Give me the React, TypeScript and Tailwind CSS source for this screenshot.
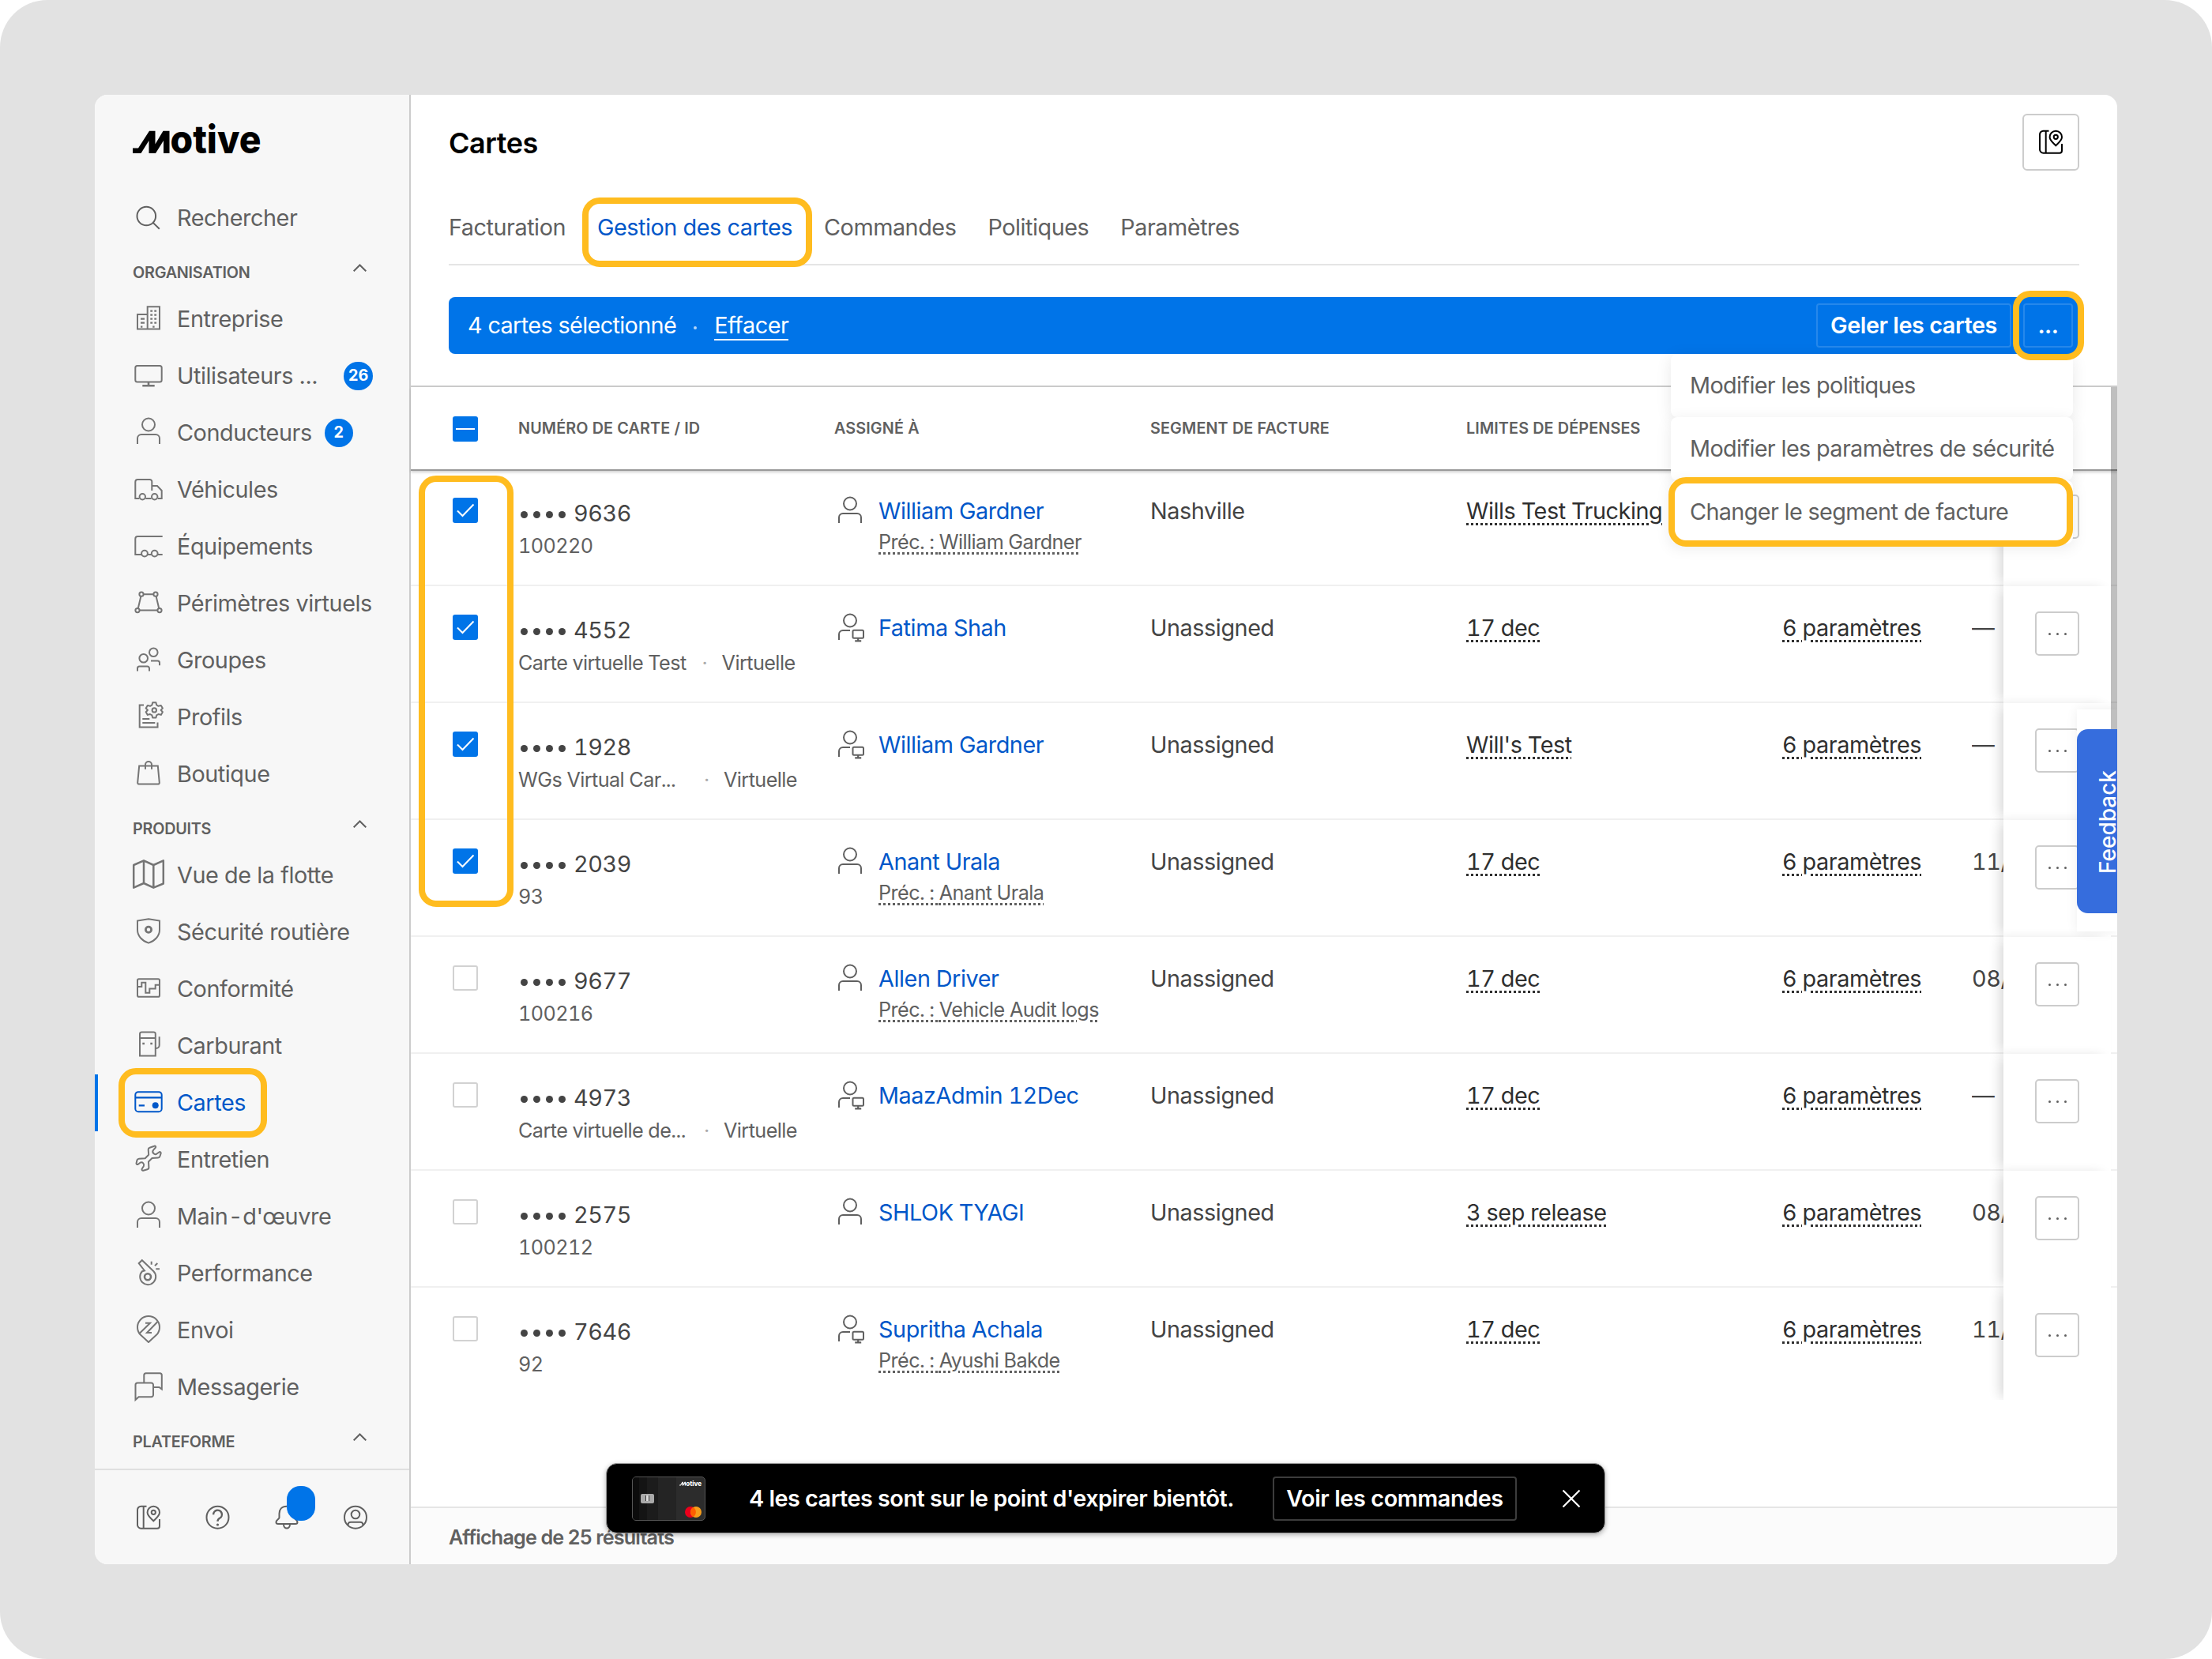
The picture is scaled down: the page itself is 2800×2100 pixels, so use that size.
import { ReactNode } from "react"

type NavItem = { label: string; icon: ReactNode; badge?: string; active?: boolean }

type CardRow = {
    digits: string
    sub: string
    virtual?: boolean
    name: string
    admin?: boolean
    prev?: string
    segment: string
    limit: string
    params?: string
    last: string
    checked?: boolean
}

// every sidebar icon is drawn on a 40x40 grid
function Icon({ children, className = "text-[#757575]" }: { children: ReactNode; className?: string }) {
    return (
        <svg
            viewBox="0 0 40 40"
            fill="none"
            stroke="currentColor"
            strokeWidth="2"
            className={`h-10 w-10 shrink-0 overflow-visible ${className}`}
        >
            {children}
        </svg>
    )
}

const person = (
    <>
        <circle cx="20" cy="9.5" r="8" />
        <path d="M6 34V27a5 5 0 0 1 5-5H29a5 5 0 0 1 5 5V34" />
    </>
)

const personDesk = (
    <>
        <circle cx="20" cy="9.5" r="8" />
        <path d="M6 34V27a5 5 0 0 1 5-5H20" />
        <rect x="23.5" y="21.8" width="13.5" height="10" rx="1.5" />
        <path d="M30.2 32V35.3M26.2 35.3H34.2" strokeWidth="2.2" />
    </>
)

const book = (
    <>
        <path d="M17.5 5.7H10.5A4.5 4.5 0 0 0 6 10.2V29.2A4.5 4.5 0 0 0 10.5 33.7H31A3 3 0 0 0 34 30.7V22" />
        <path d="M13.7 5.7V33.7" />
        <path d="M26.3 24.3C22 20 18.6 17.4 18.6 13.4a7.7 7.7 0 0 1 15.4 0C34 17.4 30.6 20 26.3 24.3Z" />
        <circle cx="26.3" cy="13.3" r="2.6" />
    </>
)

const organisation: NavItem[] = [
    {
        label: "Entreprise",
        icon: (
            <Icon>
                <path d="M6 32.5V14H18.7M18.7 32.5V4.3H34V32.5H5" />
                <path d="M22.3 9.6h2.8M27.3 9.6h2.8M22.3 14.6h2.8M27.3 14.6h2.8M22.3 19.6h2.8M27.3 19.6h2.8M22.3 24.6h2.8M27.3 24.6h2.8M10 19.6h5M10 24.6h5M10 29.6h2.4M25.2 29.6h2.4" strokeWidth="2.4" />
            </Icon>
        ),
    },
    {
        label: "Utilisateurs ...",
        badge: "26",
        icon: (
            <Icon>
                <rect x="3.3" y="7" width="33.4" height="20.5" rx="2.5" />
                <path d="M20 27.5V32M12.3 32.3H27.7" strokeWidth="2.6" />
            </Icon>
        ),
    },
    { label: "Conducteurs", badge: "2", icon: <Icon>{person}</Icon> },
    {
        label: "Véhicules",
        icon: (
            <Icon>
                <path d="M8.3 31H3.3V10A3 3 0 0 1 6.3 7H21.5A2.8 2.8 0 0 1 24.3 9.8V21M24.3 15H31L36.7 21V31H31.8M16.3 31H23.6" />
                <circle cx="12.3" cy="28.8" r="3.7" />
                <circle cx="27.7" cy="28.8" r="3.7" />
            </Icon>
        ),
    },
    {
        label: "Équipements",
        icon: (
            <Icon>
                <path d="M37.7 7H6.3A3 3 0 0 0 3.3 10V30H11M19 30H23.7M31.7 30H37.7" />
                <circle cx="15" cy="28.6" r="3.9" />
                <circle cx="27.7" cy="28.6" r="3.9" />
            </Icon>
        ),
    },
    {
        label: "Périmètres virtuels",
        icon: (
            <Icon>
                <circle cx="11" cy="8.2" r="2.6" />
                <circle cx="29" cy="8.2" r="2.6" />
                <circle cx="6" cy="28.6" r="2.6" />
                <circle cx="34" cy="28.6" r="2.6" />
                <path d="M13.6 8.2H26.4M10.4 10.7L6.8 26M29.6 10.7L33.2 26M8.6 28.6H31.4" />
            </Icon>
        ),
    },
    {
        label: "Groupes",
        icon: (
            <Icon>
                <circle cx="13.7" cy="17.2" r="5.3" />
                <circle cx="26.3" cy="9.7" r="5.3" />
                <path d="M6 33.6V30A2.5 2.5 0 0 1 8.5 27.5H18.5A2.5 2.5 0 0 1 21 30V33.6M23 20.5H31.5A2.5 2.5 0 0 1 34 23V26.3" />
            </Icon>
        ),
    },
    {
        label: "Profils",
        icon: (
            <Icon>
                <path d="M14 4.5H8.7V32.5H31.5V26.5M12.3 22H21.3M12.3 27H28.3" />
                <circle cx="27.3" cy="10.9" r="2.7" />
                <path
                    d="M25.2 1.2H29.4L30.2 4.4L32.6 5.8L35.8 4.9L37.9 8.5L35.6 10.9L37.9 13.3L35.8 16.9L32.6 16L30.2 17.4L29.4 20.6H25.2L24.4 17.4L22 16L18.8 16.9L16.7 13.3L19 10.9L16.7 8.5L18.8 4.9L22 5.8L24.4 4.4Z"
                    strokeLinejoin="round"
                />
            </Icon>
        ),
    },
    {
        label: "Boutique",
        icon: (
            <Icon>
                <path d="M8.2 9.5H31.8L33.8 30.6A1.8 1.8 0 0 1 32 32.6H8A1.8 1.8 0 0 1 6.2 30.6ZM16 13.7V8A4 4 0 0 1 24 8V13.7" />
            </Icon>
        ),
    },
]

const products: NavItem[] = [
    {
        label: "Vue de la flotte",
        icon: (
            <Icon>
                <path d="M1.2 7L14 1.3L26.3 7L38.8 1.3V30.5L26.3 35.7L14 30L1.2 35.7ZM14 1.3V30M26.3 7V35.7" strokeWidth="2.5" strokeLinejoin="round" />
            </Icon>
        ),
    },
    {
        label: "Sécurité routière",
        icon: (
            <Icon>
                <path d="M20 3.2L34 5.5V17C34 25 27.5 31.4 20 33.6C12.5 31.4 6 25 6 17V5.5Z" />
                <circle cx="20" cy="16.8" r="3.6" strokeWidth="2.8" />
            </Icon>
        ),
    },
    {
        label: "Conformité",
        icon: (
            <Icon>
                <rect x="6" y="7.3" width="28" height="22.4" rx="1.8" />
                <path d="M6 17H11.3V11.7H16.3V24.7H21.3V19.5H28.7V14.7H34" />
            </Icon>
        ),
    },
    {
        label: "Carburant",
        icon: (
            <Icon>
                <path d="M9 32.5V4.7A2.3 2.3 0 0 1 11.3 2.4H26.5A2.3 2.3 0 0 1 28.8 4.7V32.5ZM9 10H28.8M33.7 8.3V19A4 4 0 0 1 29.7 23" />
                <path d="M12.3 17H15M22.3 17H25" strokeWidth="2.6" />
            </Icon>
        ),
    },
    {
        label: "Cartes",
        active: true,
        icon: (
            <Icon className="text-[#0057c9]">
                <rect x="3.3" y="6.2" width="33.4" height="25" rx="3.8" />
                <path d="M3.3 13.4H36.7M7.7 23.4H15" strokeWidth="2.2" />
                <circle cx="28.7" cy="23.3" r="4" fill="currentColor" stroke="none" />
            </Icon>
        ),
    },
    {
        label: "Entretien",
        icon: (
            <Icon>
                <path
                    d="M27.3 2.7L21.5 4.7A2.5 2.5 0 0 0 19.7 7.2L20.2 13.7L15.7 18.2L8 18.7A3 3 0 0 0 5.5 20.5L4.5 24.7A1.5 1.5 0 0 0 6.5 26L9.5 23.7A3.3 3.3 0 0 1 13.8 28.2L11.7 31.5A1.5 1.5 0 0 0 13.3 33.7L18.5 32.3A2.5 2.5 0 0 0 20.4 29.8L20 22.5L24.5 18L32 17.5A2.8 2.8 0 0 0 34.5 15.5L35.7 11.6A1.5 1.5 0 0 0 33.7 10.2L30.8 12.3A3.3 3.3 0 0 1 26.2 7.6L28.8 4.8A1.3 1.3 0 0 0 27.3 2.7Z"
                    strokeLinejoin="round"
                />
            </Icon>
        ),
    },
    { label: "Main-d'œuvre", icon: <Icon>{person}</Icon> },
    {
        label: "Performance",
        icon: (
            <Icon>
                <circle cx="19" cy="24.3" r="4" strokeWidth="2.6" />
                <path d="M15 16.5L7.7 7.2L11.8 3.2L26.2 17A10 10 0 1 1 12 17.2ZM23.7 4.7V8.7M28 10.2L31.3 7M29.3 14.2H34" />
            </Icon>
        ),
    },
    {
        label: "Envoi",
        icon: (
            <Icon>
                <path d="M20 35L9.5 25.3A14 14 0 1 1 30.5 25.3Z" strokeLinejoin="round" />
                <path d="M8.7 23.7L22 10.7H16M31.3 9.3L18 23H24" />
            </Icon>
        ),
    },
    {
        label: "Messagerie",
        icon: (
            <Icon>
                <path d="M3.5 36V17A2.5 2.5 0 0 1 6 14.5H23.5A2.5 2.5 0 0 1 26 17V29.8A2.5 2.5 0 0 1 23.5 32.3H7.5Z" />
                <path d="M14.3 14.5V4.8A2.5 2.5 0 0 1 16.8 2.3H34.3A2.5 2.5 0 0 1 36.8 4.8V22.5L33.5 20H26.5" />
            </Icon>
        ),
    },
]

const rows: CardRow[] = [
    { digits: "9636", sub: "100220", name: "William Gardner", prev: "William Gardner", segment: "Nashville", limit: "Wills Test Trucking", last: "", checked: true },
    { digits: "4552", sub: "Carte virtuelle Test", virtual: true, name: "Fatima Shah", admin: true, segment: "Unassigned", limit: "17 dec", params: "6 paramètres", last: "—", checked: true },
    { digits: "1928", sub: "WGs Virtual Car...", virtual: true, name: "William Gardner", admin: true, segment: "Unassigned", limit: "Will's Test", params: "6 paramètres", last: "—", checked: true },
    { digits: "2039", sub: "93", name: "Anant Urala", prev: "Anant Urala", segment: "Unassigned", limit: "17 dec", params: "6 paramètres", last: "11/", checked: true },
    { digits: "9677", sub: "100216", name: "Allen Driver", prev: "Vehicle Audit logs", segment: "Unassigned", limit: "17 dec", params: "6 paramètres", last: "08/" },
    { digits: "4973", sub: "Carte virtuelle de...", virtual: true, name: "MaazAdmin 12Dec", admin: true, segment: "Unassigned", limit: "17 dec", params: "6 paramètres", last: "—" },
    { digits: "2575", sub: "100212", name: "SHLOK TYAGI", segment: "Unassigned", limit: "3 sep release", params: "6 paramètres", last: "08/" },
    { digits: "7646", sub: "92", name: "Supritha Achala", admin: true, prev: "Ayushi Bakde", segment: "Unassigned", limit: "17 dec", params: "6 paramètres", last: "11/" },
]

const tabs = ["Facturation", "Gestion des cartes", "Commandes", "Politiques", "Paramètres"]
const menu = ["Modifier les politiques", "Modifier les paramètres de sécurité", "Changer le segment de facture"]

function Logo({ className }: { className: string }) {
    return (
        <svg viewBox="0 0 162 38" className={className} fill="currentColor">
            <path d="M0 30.5H7L21 8.8H28.5V25.5L38.5 8.8H46.5V37H39V21L29 37H20.5V21L10.5 37H0Z" />
            <text x="47.5" y="36.7" fontFamily="Inter, sans-serif" fontWeight="800" fontSize="49" textLength="115" lengthAdjust="spacingAndGlyphs">
                otive
            </text>
        </svg>
    )
}

// yellow frame laid over whatever it points at
function Highlight({ className }: { className: string }) {
    return <div className={`pointer-events-none absolute z-30 rounded-[22px] border-8 border-[#ffbc1f] ${className}`} />
}

function SectionTitle({ children }: { children: string }) {
    return (
        <div className="flex h-14 justify-between pt-4 pr-[54px] pl-12 text-[19.8px] leading-8 font-semibold tracking-[-0.012em] text-[#606060]">
            <span className="mt-[1px]">{children}</span>
            <svg viewBox="0 0 17 10" className="mt-[6px] h-[10px] w-[17px]" fill="none" stroke="#606060" strokeWidth="2">
                <path d="M.7 9.3L8.5 1.5L16.3 9.3" />
            </svg>
        </div>
    )
}

function NavRow({ item }: { item: NavItem }) {
    const [before, after] = item.label.split("-")
    return (
        <div
            className={`relative flex h-[72px] items-center pl-12 text-[28.8px] tracking-[-0.015em] ${
                item.active ? "text-[#0057c9] shadow-[inset_4px_0_0_#0074e8]" : "text-[#606060]"
            }`}
        >
            {item.icon}
            <span className="ml-4 whitespace-nowrap">
                {before}
                {after && (
                    <>
                        <span className="mx-[3px]">-</span>
                        {after}
                    </>
                )}
            </span>
            {item.badge && (
                <span
                    className={`flex h-9 items-center justify-center rounded-full bg-[#0074e8] text-[19.8px] font-bold tracking-normal text-white ${
                        item.badge === "26" ? "ml-[33px] w-[37px]" : "ml-4 w-9"
                    }`}
                >
                    {item.badge}
                </span>
            )}
            {item.active && <Highlight className="top-[-8px] left-[30px] h-[88px] w-[188px]" />}
        </div>
    )
}

function Sidebar() {
    return (
        <aside className="flex w-[400px] shrink-0 flex-col border-r-2 border-[#cccccc] bg-[#f7f7f7]">
            <div className="h-[120px] pt-[37px] pl-12">
                <Logo className="h-[38px] w-[162px] overflow-visible text-black" />
            </div>
            <NavRow
                item={{
                    label: "Rechercher",
                    icon: (
                        <Icon className="text-[#606060]">
                            <circle cx="17.3" cy="17.5" r="11.8" />
                            <path d="M25.7 25.9L33.8 33.8" />
                        </Icon>
                    ),
                }}
            />
            <SectionTitle>ORGANISATION</SectionTitle>
            {organisation.map((item) => (
                <NavRow key={item.label} item={item} />
            ))}
            <SectionTitle>PRODUITS</SectionTitle>
            {products.map((item) => (
                <NavRow key={item.label} item={item} />
            ))}
            <SectionTitle>PLATEFORME</SectionTitle>
            <div className="mt-[11px] flex flex-1 items-center justify-between border-t-2 border-[#e0e0e0] px-12">
                <Icon className="text-[#606060]">{book}</Icon>
                <Icon className="text-[#606060]">
                    <circle cx="20.5" cy="19.7" r="14" />
                    <path d="M15.1 16.2A5.4 5.4 0 1 1 23 20.8C21.3 21.8 20.5 22.5 20.5 24.8" strokeWidth="2.4" />
                    <circle cx="20.5" cy="29" r="1.6" fill="currentColor" stroke="none" />
                </Icon>
                <div className="relative">
                    <Icon className="text-[#606060]">
                        <path d="M20 5.7C13.5 5.7 10.5 10 10.5 15V20C10.5 22 6.5 23 6.5 26C6.5 27.5 8 28 9 28H31C32 28 33.5 27.5 33.5 26C33.5 23 29.5 22 29.5 20V15C29.5 10 26.5 5.7 20 5.7Z" />
                        <path d="M16 28.5C16 35.3 24 35.3 24 28.5" />
                    </Icon>
                    <span className="absolute top-[-20px] left-[20px] h-11 w-9 rounded-[17px] bg-[#0074e8]" />
                </div>
                <Icon className="text-[#606060]">
                    <circle cx="20" cy="19.7" r="14" />
                    <circle cx="20" cy="16" r="5.3" />
                    <path d="M10.5 30V29A3.5 3.5 0 0 1 14 25.7H26A3.5 3.5 0 0 1 29.5 29V30" />
                </Icon>
            </div>
        </aside>
    )
}

function Checkbox({ checked }: { checked?: boolean }) {
    if (!checked) return <div className="h-8 w-8 rounded-[3px] border-2 border-[#d2d2d2] bg-white" />
    return (
        <div className="h-8 w-8 rounded-[3px] bg-[#0074e8]">
            <svg viewBox="0 0 32 32" fill="none" stroke="white" strokeWidth="2">
                <path d="M6 16.5L12.5 23L26.5 8.5" />
            </svg>
        </div>
    )
}

function Dots() {
    return (
        <div className="flex gap-[7px]">
            <span className="h-[3px] w-[3px] rounded-full bg-[#606060]" />
            <span className="h-[3px] w-[3px] rounded-full bg-[#606060]" />
            <span className="h-[3px] w-[3px] rounded-full bg-[#606060]" />
        </div>
    )
}

function TableRow({ row, first, end }: { row: CardRow; first: boolean; end: boolean }) {
    return (
        <div
            className={`flex text-[28.8px] leading-[36px] tracking-[-0.015em] text-[#444444] tabular-nums ${first ? "mt-[-2px]" : ""} ${
                end ? "h-[142px] overflow-hidden" : "h-[148px] border-b-2 border-[#f0f0f0]"
            }`}
        >
            <div className="w-[136px] shrink-0 pt-9 pl-[53px]">
                <Checkbox checked={row.checked} />
            </div>
            <div className="w-[400px] shrink-0 pt-[38px]">
                <div className="flex items-center">
                    <div className="mt-[3px] ml-[3px] flex gap-[7px]">
                        {[0, 1, 2, 3].map((i) => (
                            <span key={i} className="h-[9px] w-[9px] rounded-full bg-[#444444]" />
                        ))}
                    </div>
                    <span className="ml-[10px]">{row.digits}</span>
                </div>
                <div className="mt-2 flex text-[25.2px] leading-[30px] tracking-[-0.0226em] whitespace-nowrap text-[#606060]">
                    <span className={row.sub.includes("...") ? "w-[215px]" : ""}>{row.sub}</span>
                    {row.virtual && (
                        <>
                            <span className="mx-5 w-[5px] text-center text-[#aaaaaa]">·</span>
                            <span>Virtuelle</span>
                        </>
                    )}
                </div>
            </div>
            <div className="flex w-[400px] shrink-0 gap-4 pt-[35px]">
                <Icon className="-mt-[1px] text-[#606060]">{row.admin ? personDesk : person}</Icon>
                <div>
                    <div className="text-[#0057c9]">{row.name}</div>
                    {row.prev && (
                        <div className="mt-[6px] text-[25.2px] leading-[30px] tracking-[-0.0226em] text-[#606060] underline decoration-dotted decoration-[3px] underline-offset-[4px]">
                            Préc. : {row.prev}
                        </div>
                    )}
                </div>
            </div>
            <div className="w-[400px] shrink-0 pt-[35px]">{row.segment}</div>
            <div className="w-[400px] shrink-0 pt-[35px] text-[#2f2f2f] underline decoration-dotted decoration-[3px] underline-offset-[5px]">
                {row.limit}
            </div>
            <div className="w-[240px] shrink-0 pt-[35px] text-[#2f2f2f] underline decoration-dotted decoration-[3px] underline-offset-[5px]">
                {row.params}
            </div>
            <div className="w-10 shrink-0 overflow-hidden pt-[35px]">{row.last}</div>
            <div className={`relative z-10 w-[136px] shrink-0 bg-white pl-10 shadow-[-8px_0_14px_-4px_rgba(0,0,0,0.16)] ${end ? "" : "h-[148px]"}`}>
                <div className="mt-8 flex h-14 w-14 items-center justify-center rounded-[5px] border-2 border-[#cccccc]">
                    <Dots />
                </div>
            </div>
        </div>
    )
}

function Toolbar() {
    return (
        <div className="relative mx-12 mt-10 flex h-[72px] items-center rounded-[8px] bg-[#0074e8] pl-6 text-[28.8px] text-white">
            <span className="tracking-[-0.022em]">4 cartes sélectionné</span>
            <span className="mx-[22px] mt-[6px] h-1 w-1 rounded-full bg-white/70" />
            <span className="mt-[1px] border-b-2 border-white leading-[35px] tracking-[-0.015em]">Effacer</span>
            <div className="mr-2 ml-auto flex gap-[15px] font-semibold tracking-[-0.015em]">
                <span className="flex h-14 w-[247px] items-center justify-center rounded-[4px] border-2 border-white/15">Geler les cartes</span>
                <span className="flex h-14 w-[63px] items-center justify-center rounded-[4px] border-2 border-white/15">...</span>
            </div>
            <Highlight className="top-[-8px] right-[-6px] h-[88px] w-[90px]" />
            <div className="absolute top-[72px] right-2 z-20 w-[509px] text-[#606060]">
                {menu.map((label) => (
                    <div
                        key={label}
                        className="flex h-20 items-center rounded-[8px] bg-white pl-6 tracking-[-0.022em] whitespace-nowrap shadow-[0_4px_20px_rgba(0,0,0,0.09)]"
                    >
                        {label}
                    </div>
                ))}
                <Highlight className="right-0 bottom-[-4px] left-[-3px] h-[88px]" />
            </div>
        </div>
    )
}

function Toast() {
    return (
        <div className="absolute top-[1732px] left-[647px] z-40 flex h-[89px] w-[1265px] items-center rounded-[14px] border border-[#999999] bg-black text-[28.8px] font-semibold whitespace-nowrap text-white shadow-[0_2px_6px_rgba(0,0,0,0.3)]">
            <div className="relative ml-8 flex h-14 w-[93px] overflow-hidden rounded-[5px] border border-[#555555] bg-[#2c2c2c]">
                <div className="w-[8px] bg-[#0c0c0c]" />
                <div className="w-[10px] bg-[#141414]" />
                <div className="w-[14px] bg-[#1c1c1c]" />
                <div className="w-[23px] bg-[#242424]" />
                <div className="absolute top-[21px] left-[10px] h-[12px] w-[17px] rounded-[2px] bg-[#a9a9a9] p-[2px]">
                    <div className="mx-auto h-[7px] w-[5px] border-x border-[#333333] bg-[#dddddd]" />
                </div>
                <Logo className="absolute top-[4px] right-[4px] h-[7px] w-[28px] overflow-visible text-white" />
                <svg viewBox="0 0 21 14" className="absolute right-[4px] bottom-[3px] h-[14px] w-[21px]">
                    <circle cx="7" cy="7" r="7" fill="#eb001b" />
                    <circle cx="14" cy="7" r="7" fill="#f79e1b" />
                    <path d="M10.5 1A7 7 0 0 1 10.5 13A7 7 0 0 1 10.5 1Z" fill="#ff5f00" />
                </svg>
            </div>
            <span className="ml-[55px] tracking-[-0.0175em]">4 les cartes sont sur le point d'expirer bientôt.</span>
            <span className="absolute left-[843px] flex h-14 w-[309px] items-center justify-center rounded-[4px] border-2 border-[#3c3c3c] tracking-[-0.014em]">
                Voir les commandes
            </span>
            <svg viewBox="0 0 24 24" className="absolute right-[30px] h-6 w-6" fill="none" stroke="white" strokeWidth="2.2">
                <path d="M1.5 1.5L22.5 22.5M22.5 1.5L1.5 22.5" />
            </svg>
        </div>
    )
}

export default function App() {
    return (
        <div className="h-[2100px] w-[2800px] bg-white font-['Inter',sans-serif]">
            <div className="h-full rounded-[60px] bg-[#e2e2e2] p-[120px]">
                <div className="relative flex h-[1860px] w-[2560px] overflow-hidden rounded-[16px] bg-white">
                    <Sidebar />
                    <main className="flex flex-1 flex-col">
                        <header className="flex h-[120px] justify-between px-12 pt-6">
                            <h1 className="text-[36px] leading-[74px] font-semibold tracking-[-0.012em] text-black">Cartes</h1>
                            <button className="flex h-[72px] w-[72px] items-center justify-center rounded-[6px] border-2 border-[#cccccc]">
                                <Icon className="text-black">{book}</Icon>
                            </button>
                        </header>
                        <nav className="mx-12 flex h-24 gap-10 border-b-2 border-[#e5e5e5] text-[28.8px] leading-[96px] tracking-[-0.016em] text-[#606060]">
                            {tabs.map((tab) =>
                                tab === "Gestion des cartes" ? (
                                    <div key={tab} className="relative text-[#0057c9]">
                                        {tab}
                                        <Highlight className="top-[10px] left-[-19px] h-[88px] w-[291px]" />
                                    </div>
                                ) : (
                                    <div key={tab}>{tab}</div>
                                )
                            )}
                        </nav>
                        <Toolbar />
                        <div className="relative mt-10 border-t-2 border-[#cccccc]">
                            <div className="relative z-[11] flex h-[106px] items-center border-b-2 border-[#999999] bg-white pt-[2px] text-[19.8px] font-semibold tracking-[0.006em] text-[#606060] shadow-[0_2px_3px_rgba(0,0,0,0.18)]">
                                <div className="w-[136px] pl-[53px]">
                                    <div className="flex h-8 w-8 items-center rounded-[3px] bg-[#0074e8] px-1">
                                        <div className="h-[2px] w-full bg-white" />
                                    </div>
                                </div>
                                <div className="w-[400px]">NUMÉRO DE CARTE / ID</div>
                                <div className="w-[400px]">ASSIGNÉ À</div>
                                <div className="w-[400px]">SEGMENT DE FACTURE</div>
                                <div className="w-[400px]">LIMITES DE DÉPENSES</div>
                            </div>
                            {rows.map((row, i) => (
                                <TableRow key={row.digits} row={row} first={i === 0} end={i === rows.length - 1} />
                            ))}
                            <Highlight className="top-[112px] left-[10px] h-[546px] w-[120px]" />
                            <div className="absolute top-[408px] right-0 z-20 h-[281px] w-[51px] bg-white shadow-[0_0_14px_rgba(0,0,0,0.07)]" />
                            <div className="absolute top-0 right-0 z-20 h-[460px] w-2 bg-black/25" />
                            <div className="absolute top-[433px] right-0 z-20 flex h-[233px] w-[51px] items-center overflow-hidden rounded-l-[14px] bg-[#366ddd] text-[28px] font-medium text-white">
                                <span className="mt-[2px] ml-[21px] rotate-180 leading-[36px] [writing-mode:vertical-rl]">Feedback</span>
                            </div>
                        </div>
                        <footer className="mt-auto h-[73px] border-t-2 border-[#e5e5e5] bg-[#fbfbfb] pl-12 text-[25.2px] leading-[74px] font-semibold tracking-[-0.034em] text-[#606060]">
                            Affichage de 25 résultats
                        </footer>
                    </main>
                    <Toast />
                </div>
            </div>
        </div>
    )
}
